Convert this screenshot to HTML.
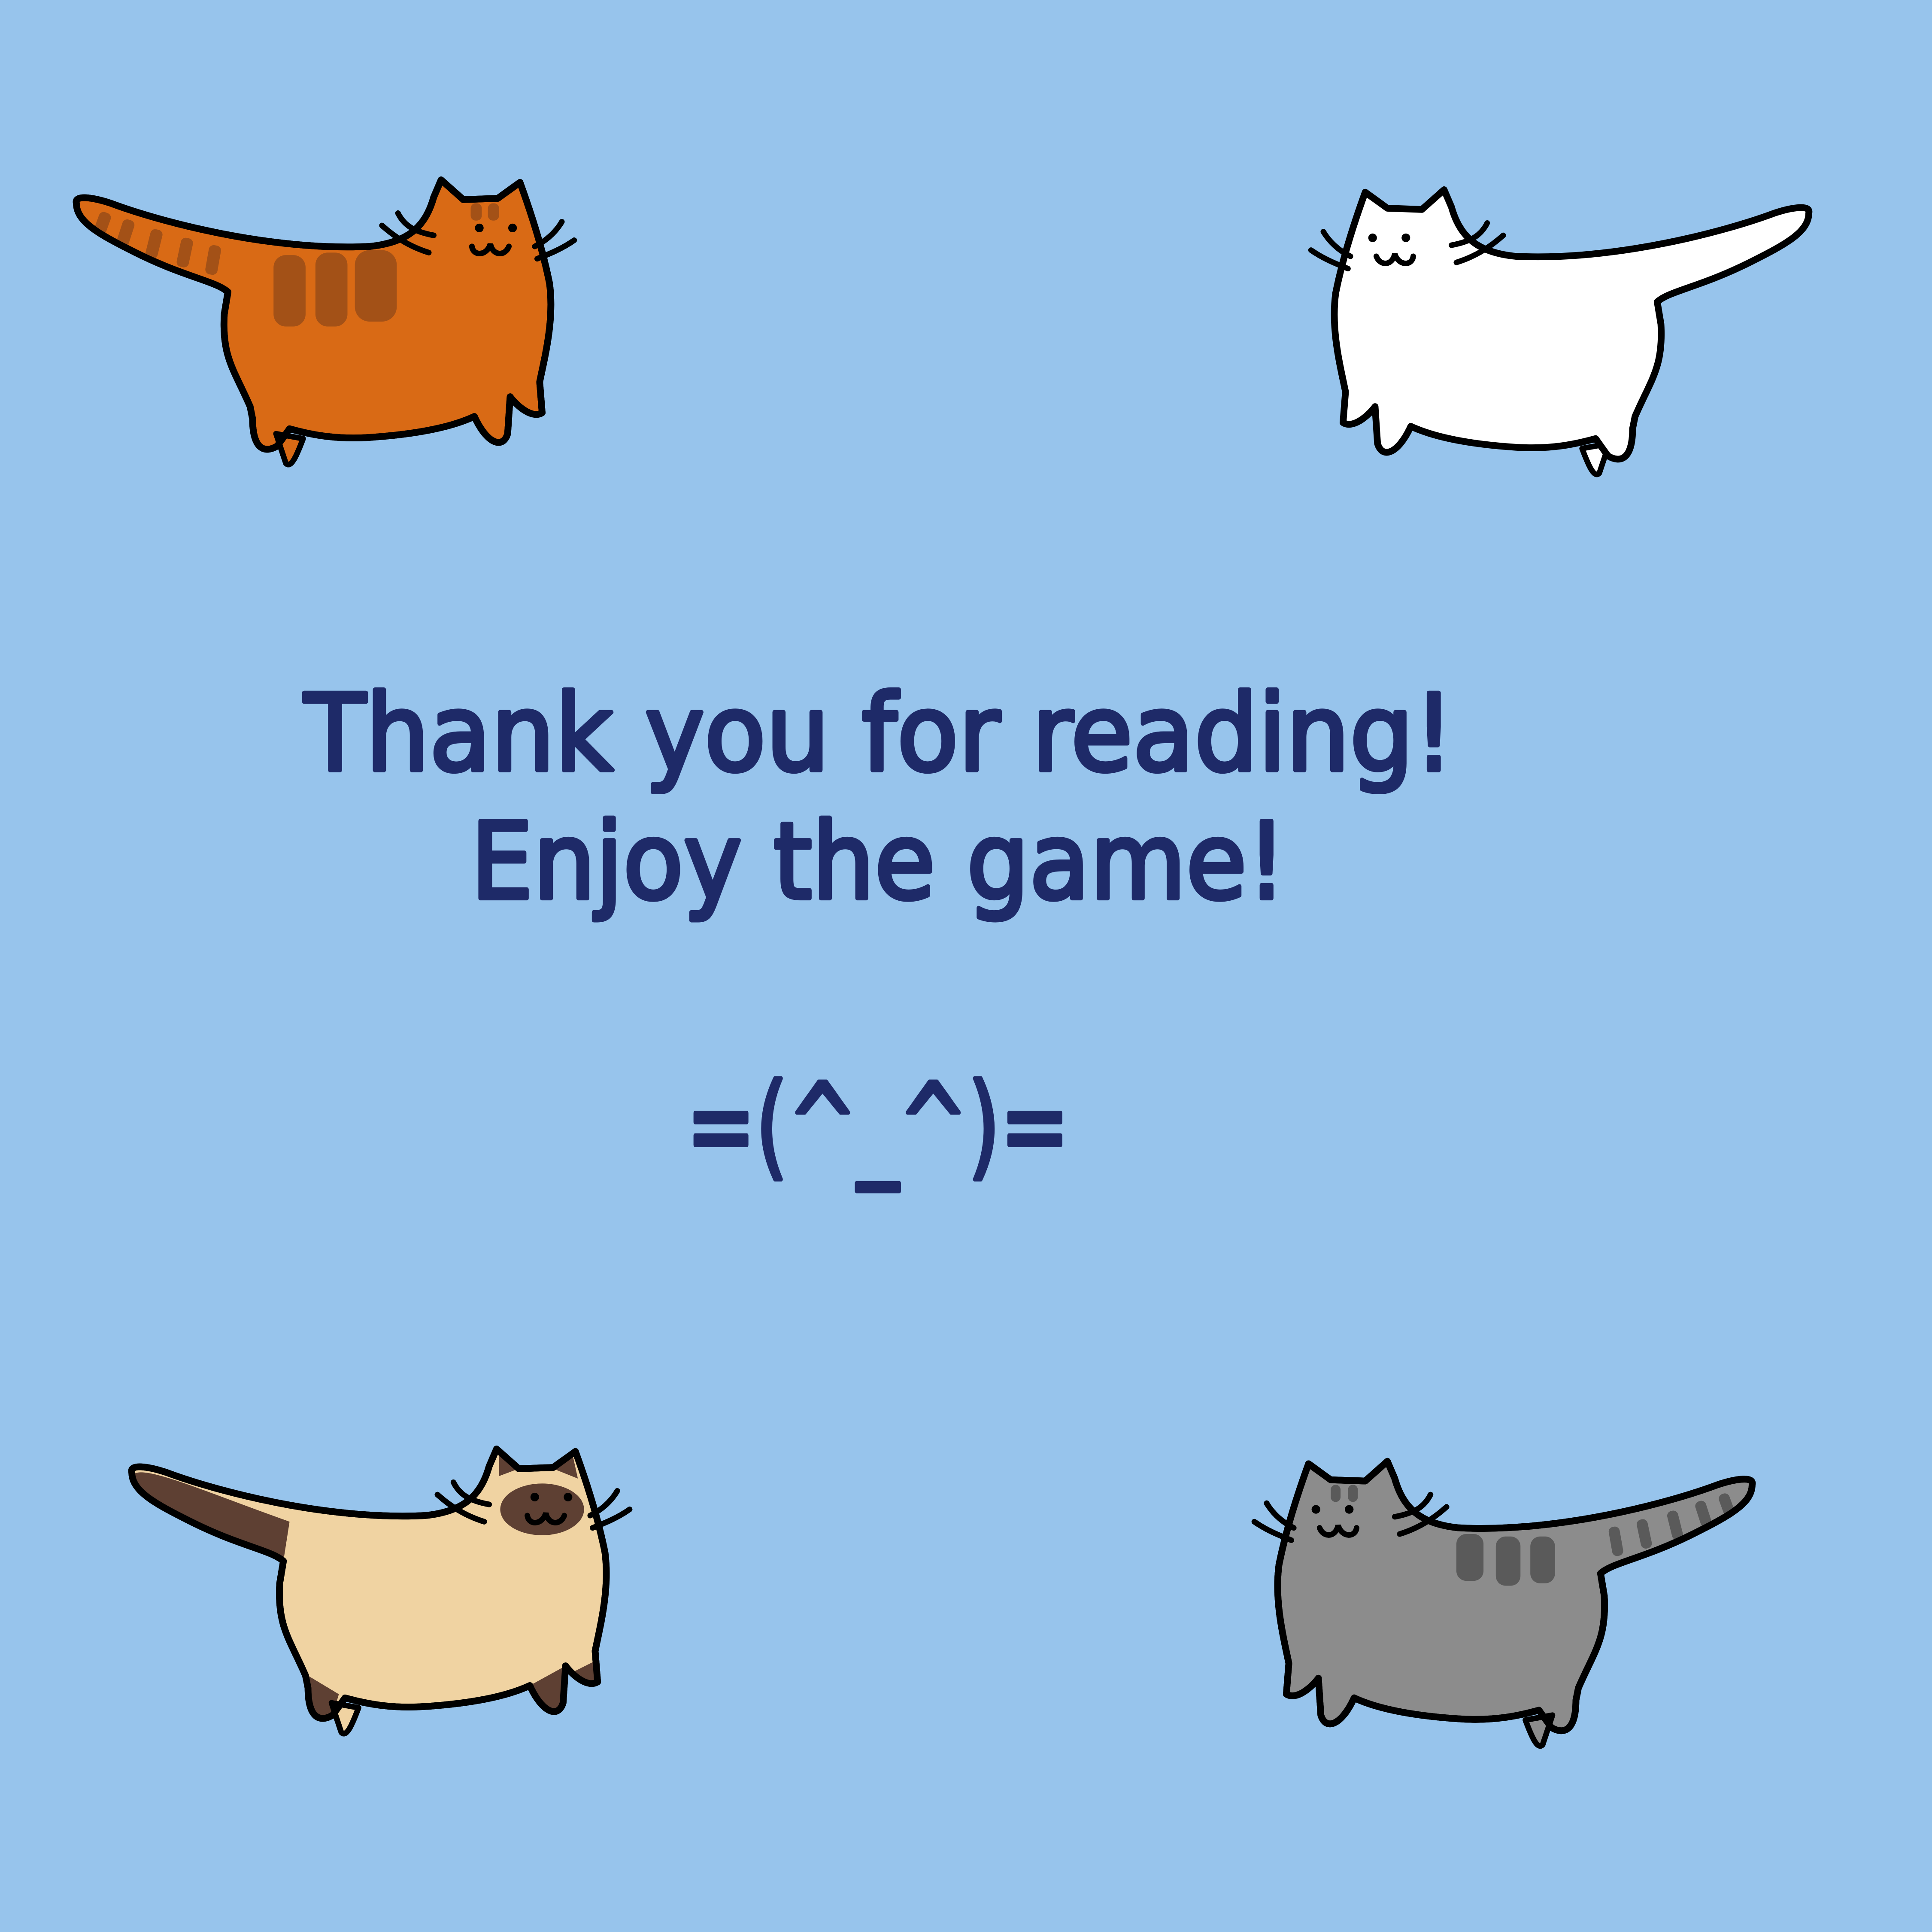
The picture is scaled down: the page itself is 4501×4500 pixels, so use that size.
<!DOCTYPE html>
<html><head><meta charset="utf-8"><style>
html,body{margin:0;padding:0;background:#97c4ec;overflow:hidden}
svg{display:block}
</style></head><body>
<svg width="4501" height="4500" viewBox="0 0 1568 1568" preserveAspectRatio="none" xmlns="http://www.w3.org/2000/svg">
<rect width="1568" height="1568" fill="#97c4ec"/>
<defs>
<g id="cat">
  <path class="paw" d="M224,352 L232,376 C236,380 240,372 246,356 Z" stroke="#000" stroke-width="4.5" stroke-linejoin="round"/>
  <path class="body" d="M62,165 C60,158 75,160 90,165 C130,180 220,204 300,200 C330,197 345,185 352,160 L358,146 L376,162 L404,161 L422,148 C430,170 440,200 446,230 C450,260 442,290 438,310 L440,335 C432,340 420,330 414,322 L412,352 C408,365 395,360 385,338 C370,345 345,352 300,355 C270,357 250,352 235,348 L225,362 C215,368 205,365 205,340 L203,330 C190,300 180,290 182,255 L185,237 C175,228 150,225 110,205 C80,190 62,180 62,165 Z" stroke="#000" stroke-width="5.5" stroke-linejoin="round"/>
  <g fill="none" stroke="#000" stroke-width="4.5" stroke-linecap="round">
    <path d="M323,173 C328,183 336,188 352,191"/>
    <path d="M310,183 C320,192 332,200 348,205"/>
    <path d="M456,180 C450,190 442,196 434,200"/>
    <path d="M466,195 C456,202 446,206 436,210"/>
    <path d="M383,200 C384,208 395,208 398,198 C400,208 410,208 413,200"/>
  </g>
  <circle cx="389" cy="185" r="3.5" fill="#000"/>
  <circle cx="416" cy="185" r="3.5" fill="#000"/>
</g>
</defs>

<g>
  <use href="#cat" fill="#d96a15"/>
  <g fill="#a35117">
    <rect x="222" y="207" width="26" height="58" rx="10"/>
    <rect x="256" y="205" width="26" height="60" rx="10"/>
    <rect x="288" y="203" width="34" height="58" rx="12"/>
    <rect x="382" y="165" width="9" height="14" rx="4"/>
    <rect x="396" y="165" width="9" height="14" rx="4"/>
    <rect x="78" y="172" width="10" height="20" rx="4" transform="rotate(20 83 182)"/>
    <rect x="97" y="178" width="10" height="22" rx="4" transform="rotate(18 102 189)"/>
    <rect x="120" y="186" width="10" height="24" rx="4" transform="rotate(14 125 198)"/>
    <rect x="145" y="193" width="10" height="24" rx="4" transform="rotate(12 150 205)"/>
    <rect x="168" y="199" width="10" height="24" rx="4" transform="rotate(10 173 211)"/>
  </g>
  <use href="#cat" fill="none"/>
</g>

<g transform="translate(1530,8) scale(-1,1)">
  <use href="#cat" fill="#ffffff"/>
</g>

<g transform="translate(45,1030)">
  <use href="#cat" fill="#f0d3a2"/>
  <path d="M64,166 C75,160 120,180 190,205 L185,237 C175,228 150,225 110,205 C80,190 62,180 64,166 Z" fill="#5e4033"/>
  <ellipse cx="395" cy="195" rx="34" ry="21" fill="#5e4033"/>
  <path d="M360,150 L376,162 L360,168 Z" fill="#5e4033"/>
  <path d="M420,152 L404,162 L424,170 Z" fill="#5e4033"/>
  <path d="M205,330 L230,345 L225,362 C215,368 205,365 205,340 Z" fill="#5e4033"/>
  <path d="M385,338 L414,322 L412,352 C408,365 395,360 385,338 Z" fill="#5e4033"/>
  <path d="M418,328 L438,318 L440,335 C432,340 422,334 418,328 Z" fill="#5e4033"/>
  <use href="#cat" fill="none"/>
</g>

<g transform="translate(1484,1040) scale(-1,1)">
  <use href="#cat" fill="#8c8c8c"/>
  <g fill="#5a5a5a">
    <rect x="222" y="207" width="20" height="38" rx="8"/>
    <rect x="250" y="207" width="20" height="40" rx="8"/>
    <rect x="280" y="205" width="22" height="38" rx="8"/>
    <rect x="382" y="165" width="8" height="14" rx="4"/>
    <rect x="396" y="165" width="8" height="14" rx="4"/>
    <rect x="78" y="172" width="9" height="20" rx="4" transform="rotate(20 83 182)"/>
    <rect x="97" y="178" width="9" height="22" rx="4" transform="rotate(18 102 189)"/>
    <rect x="120" y="186" width="9" height="24" rx="4" transform="rotate(14 125 198)"/>
    <rect x="145" y="193" width="9" height="24" rx="4" transform="rotate(12 150 205)"/>
    <rect x="168" y="199" width="9" height="24" rx="4" transform="rotate(10 173 211)"/>
  </g>
  <use href="#cat" fill="none"/>
</g>

<g fill="#1e2a68" stroke="#1e2a68" stroke-width="3.5" stroke-linejoin="round" font-family="'DejaVu Sans', 'Liberation Sans', sans-serif" font-weight="normal">
  <text x="247" y="625" font-size="86" textLength="933" lengthAdjust="spacingAndGlyphs">Thank you for reading!</text>
  <text x="382" y="729" font-size="86" textLength="662" lengthAdjust="spacingAndGlyphs">Enjoy the game!</text>
  <text x="557" y="945" font-size="92" textLength="311" lengthAdjust="spacingAndGlyphs">=(^_^)=</text>
</g>
</svg>
</body></html>
